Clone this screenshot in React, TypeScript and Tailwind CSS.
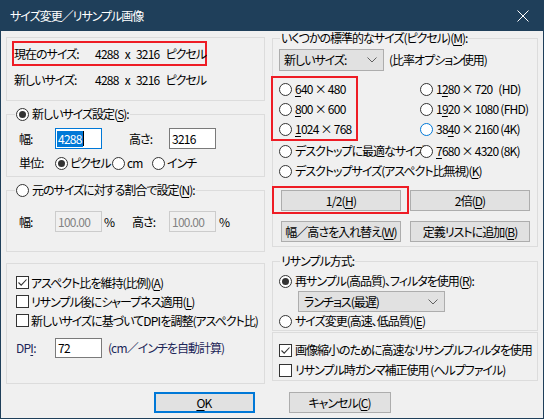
import React from 'react';

const Radio = ({ checked = false, blue = false }: { checked?: boolean; blue?: boolean }) => (
  <span
    className={`inline-flex w-[13px] h-[13px] shrink-0 rounded-full border bg-white items-center justify-center ${
      blue ? 'border-[#0078d7]' : 'border-[#333333]'
    }`}
  >
    {checked && <span className="w-[7px] h-[7px] rounded-full bg-[#333333]" />}
  </span>
);

const Check = ({ checked = false }: { checked?: boolean }) => (
  <span className="inline-flex w-[13px] h-[13px] shrink-0 border border-[#333333] bg-white items-center justify-center">
    {checked && (
      <svg width="11" height="11" viewBox="0 0 11 11">
        <path d="M1.5 5.5 L4.2 8.2 L9.5 2.5" stroke="#333333" strokeWidth="1.1" fill="none" />
      </svg>
    )}
  </span>
);

const U = ({ children }: { children: React.ReactNode }) => (
  <span className="underline underline-offset-[2px] decoration-[1px]">{children}</span>
);

const L = ({ children, className = '' }: { children: React.ReactNode; className?: string }) => (
  <span className={`tracking-[-0.75px] ${className}`}>{children}</span>
);

const Chevron = () => (
  <svg width="10" height="6" viewBox="0 0 10 6" className="shrink-0">
    <path d="M0.5 0.5 L5 5 L9.5 0.5" stroke="#606060" strokeWidth="1" fill="none" />
  </svg>
);

const Btn = ({ children, className = '' }: { children: React.ReactNode; className?: string }) => (
  <div
    className={`h-[21px] flex items-center justify-center bg-[#e1e1e1] border border-[#adadad] whitespace-nowrap ${className}`}
  >
    {children}
  </div>
);

const SizeVal = () => (
  <span className="flex gap-[6px] shrink-0">
    <L>4288</L>
    <L>x</L>
    <L>3216</L>
    <span>ピクセル</span>
  </span>
);

export default function App() {
  return (
    <div className="w-[544px] h-[419px] bg-[#1f3f5a] flex flex-col text-[12px] leading-[16px] tracking-[-1px] text-black font-['Noto_Sans_CJK_JP','Noto_Sans',sans-serif] [font-feature-settings:'palt']">
      {/* Title bar */}
      <div className="h-[31px] shrink-0 flex items-center pl-[10px] pr-[15px] text-white">
        <span>サイズ変更／リサンプル画像</span>
        <svg width="12" height="12" viewBox="0 0 12 12" className="ml-auto">
          <path d="M0.5 0.5 L11.5 11.5 M11.5 0.5 L0.5 11.5" stroke="#ffffff" strokeWidth="1" />
        </svg>
      </div>

      {/* Body */}
      <div className="flex-1 mx-px mb-px bg-[#f0f0f0] flex flex-col">
        <div className="flex pl-[5px]">
          {/* Left column */}
          <div className="w-[259px] flex flex-col shrink-0">
            {/* Current size box */}
            <div className="mt-[6px] h-[64px] border border-[#dcdcdc] pl-[5px] pt-[3px]">
              <div className="w-[195px] h-[25px] border-2 border-[#ee1c25] flex items-center whitespace-nowrap">
                <span className="w-[81px] shrink-0">現在のサイズ:</span>
                <SizeVal />
              </div>
              <div className="mt-[6px] h-[16px] pl-[2px] flex items-center whitespace-nowrap">
                <span className="w-[81px] shrink-0">新しいサイズ:</span>
                <SizeVal />
              </div>
            </div>

            {/* New size setting */}
            <fieldset className="mt-[5px] border border-[#dcdcdc] pb-[3px]">
              <legend className="ml-[8px] px-[1px] h-[16px] flex items-center gap-[3px] whitespace-nowrap">
                <Radio checked />
                <span>
                  新しいサイズ設定(<U>S</U>):
                </span>
              </legend>
              <div className="pl-[12px]">
                <div className="mt-[6px] h-[21px] flex items-center">
                  <span className="w-[36px] shrink-0">幅:</span>
                  <div className="w-[47px] h-[21px] border border-[#0078d7] bg-white flex items-center pl-[1px]">
                    <L className="bg-[#0078d7] text-white h-[16px] leading-[16px] pl-px pr-px">4288</L>
                    <span className="w-px h-[15px] bg-black" />
                  </div>
                  <span className="w-[27px] shrink-0" />
                  <span className="w-[40px] shrink-0">高さ:</span>
                  <div className="w-[47px] h-[21px] border border-[#7a7a7a] bg-white flex items-center pl-[2px]">
                    <L>3216</L>
                  </div>
                </div>
                <div className="mt-[4px] h-[20px] flex items-center whitespace-nowrap">
                  <span className="w-[36px] shrink-0">単位:</span>
                  <Radio checked />
                  <span className="ml-[2px] w-[42px] shrink-0">ピクセル</span>
                  <Radio />
                  <L className="ml-[2px] w-[25px] shrink-0">cm</L>
                  <Radio />
                  <span className="ml-[2px]">インチ</span>
                </div>
              </div>
            </fieldset>

            {/* Percent setting */}
            <fieldset className="mt-[5px] border border-[#dcdcdc] pb-[19px]">
              <legend className="ml-[8px] px-[1px] h-[16px] flex items-center gap-[3px] whitespace-nowrap">
                <Radio />
                <span>
                  元のサイズに対する割合で設定(<U>N</U>):
                </span>
              </legend>
              <div className="pl-[12px]">
                <div className="mt-[13px] h-[21px] flex items-center">
                  <span className="w-[36px] shrink-0">幅:</span>
                  <div className="w-[47px] h-[21px] border border-[#cccccc] bg-[#f0f0f0] text-[#838383] flex items-center pl-[2px]">
                    <L>100.00</L>
                  </div>
                  <L className="w-[30px] shrink-0 pl-[2px]">%</L>
                  <span className="w-[37px] shrink-0">高さ:</span>
                  <div className="w-[47px] h-[21px] border border-[#cccccc] bg-[#f0f0f0] text-[#838383] flex items-center pl-[2px]">
                    <L>100.00</L>
                  </div>
                  <L className="pl-[3px]">%</L>
                </div>
              </div>
            </fieldset>

            {/* Options */}
            <div className="mt-[11px] h-[121px] border border-[#dcdcdc] pt-[9px] pl-[9px] flex flex-col">
              <div className="h-[19px] flex items-center gap-[2px] whitespace-nowrap">
                <Check checked />
                <span>
                  アスペクト比を維持(比例)(<U>A</U>)
                </span>
              </div>
              <div className="h-[19px] flex items-center gap-[2px] whitespace-nowrap">
                <Check />
                <span>
                  リサンプル後にシャープネス適用(<U>L</U>)
                </span>
              </div>
              <div className="h-[19px] flex items-center gap-[2px] whitespace-nowrap">
                <Check />
                <span>
                  新しいサイズに基づいて<L>DPI</L>を調整(アスペクト比)
                </span>
              </div>
              <div className="mt-[8px] h-[20px] flex items-center whitespace-nowrap">
                <L className="w-[39px] shrink-0 text-[#1c2658]">
                  DP<U>I</U>:
                </L>
                <div className="w-[47px] h-[20px] border border-[#7a7a7a] bg-white flex items-center pl-[2px]">
                  <L>72</L>
                </div>
                <span className="ml-[6px] text-[#1c2658]">
                  (<L>cm</L>／インチを自動計算)
                </span>
              </div>
            </div>
          </div>

          {/* Right column */}
          <div className="ml-[7px] w-[266px] flex flex-col shrink-0">
            <fieldset className="border border-[#dcdcdc] pb-[4px]">
              <legend className="ml-[7px] px-[1px] h-[14px] leading-[14px] whitespace-nowrap">
                いくつかの標準的なサイズ(ピクセル)(<U>M</U>):
              </legend>
              <div className="pl-[6px] flex flex-col">
                <div className="mt-[4px] flex items-center whitespace-nowrap">
                  <div className="w-[105px] h-[22px] bg-[#e1e1e1] border border-[#adadad] flex items-center pl-[4px] pr-[6px]">
                    <span>新しいサイズ:</span>
                    <span className="ml-auto">
                      <Chevron />
                    </span>
                  </div>
                  <span className="ml-[5px]">(比率オプション使用)</span>
                </div>

                <div className="mt-[5px] flex">
                  <div className="ml-[-8px] w-[87px] shrink-0 border-2 border-[#ee1c25] pt-[1px] pl-[6px] flex flex-col">
                    <div className="h-[20px] flex items-center gap-[3px] whitespace-nowrap">
                      <Radio />
                      <L>
                        <U>6</U>40 × 480
                      </L>
                    </div>
                    <div className="h-[20px] flex items-center gap-[3px] whitespace-nowrap">
                      <Radio />
                      <L>
                        <U>8</U>00 × 600
                      </L>
                    </div>
                    <div className="h-[20px] flex items-center gap-[3px] whitespace-nowrap">
                      <Radio />
                      <L>
                        <U>1</U>024 × 768
                      </L>
                    </div>
                  </div>
                  <div className="ml-[62px] pt-[3px] flex flex-col">
                    <div className="h-[20px] flex items-center gap-[3px] whitespace-nowrap">
                      <Radio />
                      <L>
                        1<U>2</U>80 × 720&nbsp;&nbsp;&nbsp;(HD)
                      </L>
                    </div>
                    <div className="h-[20px] flex items-center gap-[3px] whitespace-nowrap">
                      <Radio />
                      <L>
                        1<U>9</U>20 × 1080 (FHD)
                      </L>
                    </div>
                    <div className="h-[20px] flex items-center gap-[3px] whitespace-nowrap">
                      <Radio blue />
                      <L>
                        38<U>4</U>0 × 2160 (4K)
                      </L>
                    </div>
                  </div>
                </div>

                <div className="h-[20px] flex items-center whitespace-nowrap">
                  <div className="w-[141px] shrink-0 flex items-center gap-[3px]">
                    <Radio />
                    <span>デスクトップに最適なサイズ</span>
                  </div>
                  <div className="flex items-center gap-[3px]">
                    <Radio />
                    <L>
                      <U>7</U>680 × 4320 (8K)
                    </L>
                  </div>
                </div>
                <div className="h-[20px] flex items-center gap-[3px] whitespace-nowrap">
                  <Radio />
                  <span>
                    デスクトップサイズ(アスペクト比無視)(<U>K</U>)
                  </span>
                </div>

                <div className="mt-[5px] flex items-start">
                  <div className="ml-[-7px] w-[137px] shrink-0 border-2 border-[#ee1c25] pt-[2px] pl-[7px] pb-[1px]">
                    <Btn className="w-[120px]">
                      <L>
                        1/2(<U>H</U>)
                      </L>
                    </Btn>
                  </div>
                  <Btn className="mt-[4px] ml-px w-[120px] shrink-0">
                    <L>2</L>倍(<U>D</U>)
                  </Btn>
                </div>
                <div className="mt-[7px] ml-[2px] flex gap-[9px]">
                  <Btn className="w-[120px] shrink-0">
                    幅／高さを入れ替え(<U>W</U>)
                  </Btn>
                  <Btn className="w-[120px] shrink-0">
                    定義リストに追加(<U>B</U>)
                  </Btn>
                </div>
              </div>
            </fieldset>

            <fieldset className="mt-[6px] border border-[#dcdcdc] pb-[1px]">
              <legend className="ml-[7px] px-[1px] h-[16px] leading-[16px] whitespace-nowrap">
                リサンプル方式:
              </legend>
              <div className="pl-[6px] flex flex-col">
                <div className="mt-[4px] h-[16px] flex items-center gap-[3px] whitespace-nowrap">
                  <Radio checked />
                  <span>
                    再サンプル(高品質)、フィルタを使用(<U>R</U>):
                  </span>
                </div>
                <div className="mt-[2px] ml-[19px] w-[147px] h-[21px] bg-[#e1e1e1] border border-[#adadad] flex items-center pl-[5px] pr-[6px] whitespace-nowrap">
                  <span>ランチョス(最遅)</span>
                  <span className="ml-auto">
                    <Chevron />
                  </span>
                </div>
                <div className="mt-[1px] h-[16px] flex items-center gap-[3px] whitespace-nowrap">
                  <Radio />
                  <span>
                    サイズ変更(高速、低品質)(<U>E</U>)
                  </span>
                </div>
              </div>
            </fieldset>

            <div className="mt-[1px] border border-[#dcdcdc] pt-[7px] pl-[6px] flex flex-col">
              <div className="h-[20px] flex items-center gap-[3px] whitespace-nowrap">
                <Check checked />
                <span>画像縮小のために高速なリサンプルフィルタを使用</span>
              </div>
              <div className="h-[20px] flex items-center gap-[3px] whitespace-nowrap">
                <Check />
                <span>リサンプル時ガンマ補正使用 (ヘルプファイル)</span>
              </div>
            </div>
          </div>
        </div>

        {/* Bottom buttons */}
        <div className="mt-[8px] flex justify-center gap-[34px]">
          <div className="w-[101px] h-[21px] flex items-center justify-center bg-[#e1e1e1] border-2 border-[#0078d7]">
            <L>
              <U>O</U>K
            </L>
          </div>
          <Btn className="w-[102px]">
            キャンセル(<U>C</U>)
          </Btn>
        </div>
      </div>
    </div>
  );
}
